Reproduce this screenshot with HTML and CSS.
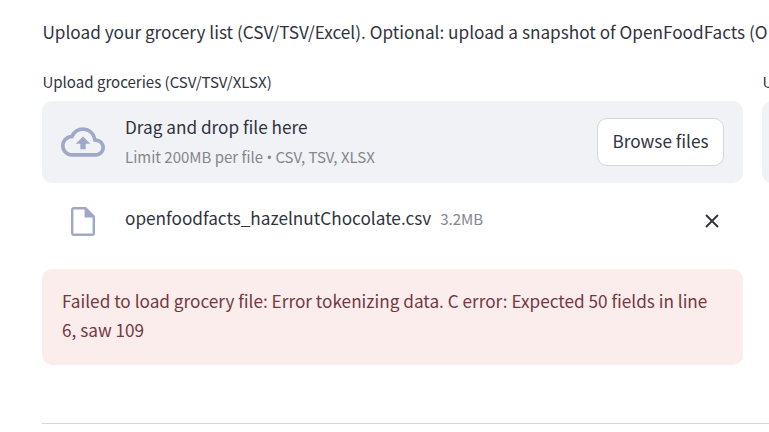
FILE: index.html
```html
<!DOCTYPE html>
<html lang="en">
<head>
<meta charset="utf-8">
<title>Grocery upload</title>
<link rel="stylesheet" href="styles.css">
</head>
<body>
<main class="page">
  <p class="intro">Upload your grocery list (CSV/TSV/Excel). Optional: upload a snapshot of OpenFoodFacts (O</p>
  <div class="columns">
    <section class="column">
      <div class="label">Upload groceries (CSV/TSV/XLSX)</div>
      <div class="dropzone">
        <svg class="cloud" viewBox="0 0 24 24"><path d="M19.35 10.04A7.49 7.49 0 0 0 12 4C9.11 4 6.6 5.64 5.35 8.04A5.994 5.994 0 0 0 0 14c0 3.31 2.69 6 6 6h13c2.76 0 5-2.24 5-5 0-2.64-2.05-4.78-4.65-4.96zM19 18H6c-2.21 0-4-1.79-4-4 0-2.05 1.53-3.76 3.56-3.97l1.07-.11.5-.95A5.469 5.469 0 0 1 12 6c2.62 0 4.88 1.86 5.39 4.43l.3 1.5 1.53.11A2.98 2.98 0 0 1 22 15c0 1.65-1.35 3-3 3zM8 13h2.55v3h2.9v-3H16l-4-4-4 4z"/></svg>
        <div class="hint">
          <div class="hint-title">Drag and drop file here</div>
          <div class="hint-note">Limit 200MB per file <span class="bullet">•</span> CSV, TSV, XLSX</div>
        </div>
        <button class="browse" type="button">Browse files</button>
      </div>
      <div class="file">
        <svg class="doc" viewBox="0 0 24 29"><path fill-rule="evenodd" d="M3 0H15L24 9V26a3 3 0 0 1-3 3H3a3 3 0 0 1-3-3V3A3 3 0 0 1 3 0zM2.4 2.4V26.6H21.6V10.4H13.6V2.4z"/></svg>
        <span class="file-name">openfoodfacts_hazelnutChocolate.csv</span>
        <span class="file-size">3.2MB</span>
        <svg class="remove" viewBox="0 0 14 14"><path d="M1 1l12 12M13 1L1 13"/></svg>
      </div>
      <div class="alert">Failed to load grocery file: Error tokenizing data. C error: Expected 50 fields in line 6, saw 109</div>
    </section>
    <section class="column">
      <div class="label">Upload OFF snapshot</div>
      <div class="dropzone"></div>
    </section>
  </div>
  <hr class="divider">
</main>
</body>
</html>
```
FILE: styles.css
```css
* { box-sizing: border-box; }
body {
  margin: 0;
  height: 432px;
  overflow: hidden;
  background: #fff;
  color: #31333f;
  font: 17.2px/29px "Noto Sans CJK SC", sans-serif;
}
.page { width: 727px; margin-left: 42px; padding-top: 17px; overflow: hidden; }
.intro { margin: 0 0 22px; padding-left: 0.4px; white-space: nowrap; }
.columns { display: grid; grid-template-columns: 701px 701px; gap: 19px; }
.label { height: 33px; padding-left: 0.4px; font-size: 15.05px; line-height: 28px; }
.dropzone {
  display: flex;
  align-items: center;
  height: 82px;
  padding: 0 19px;
  border-radius: 10px;
  background: #f0f2f6;
}
.cloud { width: 44px; height: 44px; margin-right: 20px; fill: #9fa8c6; }
.hint-title { height: 30px; line-height: 28px; }
.hint-note { height: 28px; font-size: 15px; line-height: 28px; color: #84868d; }
.bullet { font-family: "Open Sans", sans-serif; }
.browse {
  width: 127px;
  height: 48px;
  margin-left: auto;
  padding: 0 0 4px;
  border: 1px solid #d6d6d9;
  border-radius: 10px;
  background: #fff;
  color: inherit;
  font: inherit;
}
.file { display: flex; align-items: center; height: 77px; padding: 0 24px 0 29px; }
.doc { width: 24px; height: 29px; margin-right: 30px; fill: #9fa8c6; }
.file-name { margin-right: 9px; padding-bottom: 8px; }
.file-size { padding-bottom: 7px; font-size: 15.05px; color: #84868d; }
.remove { width: 14px; height: 14px; margin: -2px 0 0 auto; fill: none; stroke: #31333f; stroke-width: 1.9; }
.alert {
  height: 96px;
  margin-top: 9px;
  padding: 17px 20px;
  border-radius: 10px;
  background: #fceded;
  color: #75383e;
}
.divider { margin: 58px 0 0; border: 0; border-top: 1px solid #d6d6d9; }
```
